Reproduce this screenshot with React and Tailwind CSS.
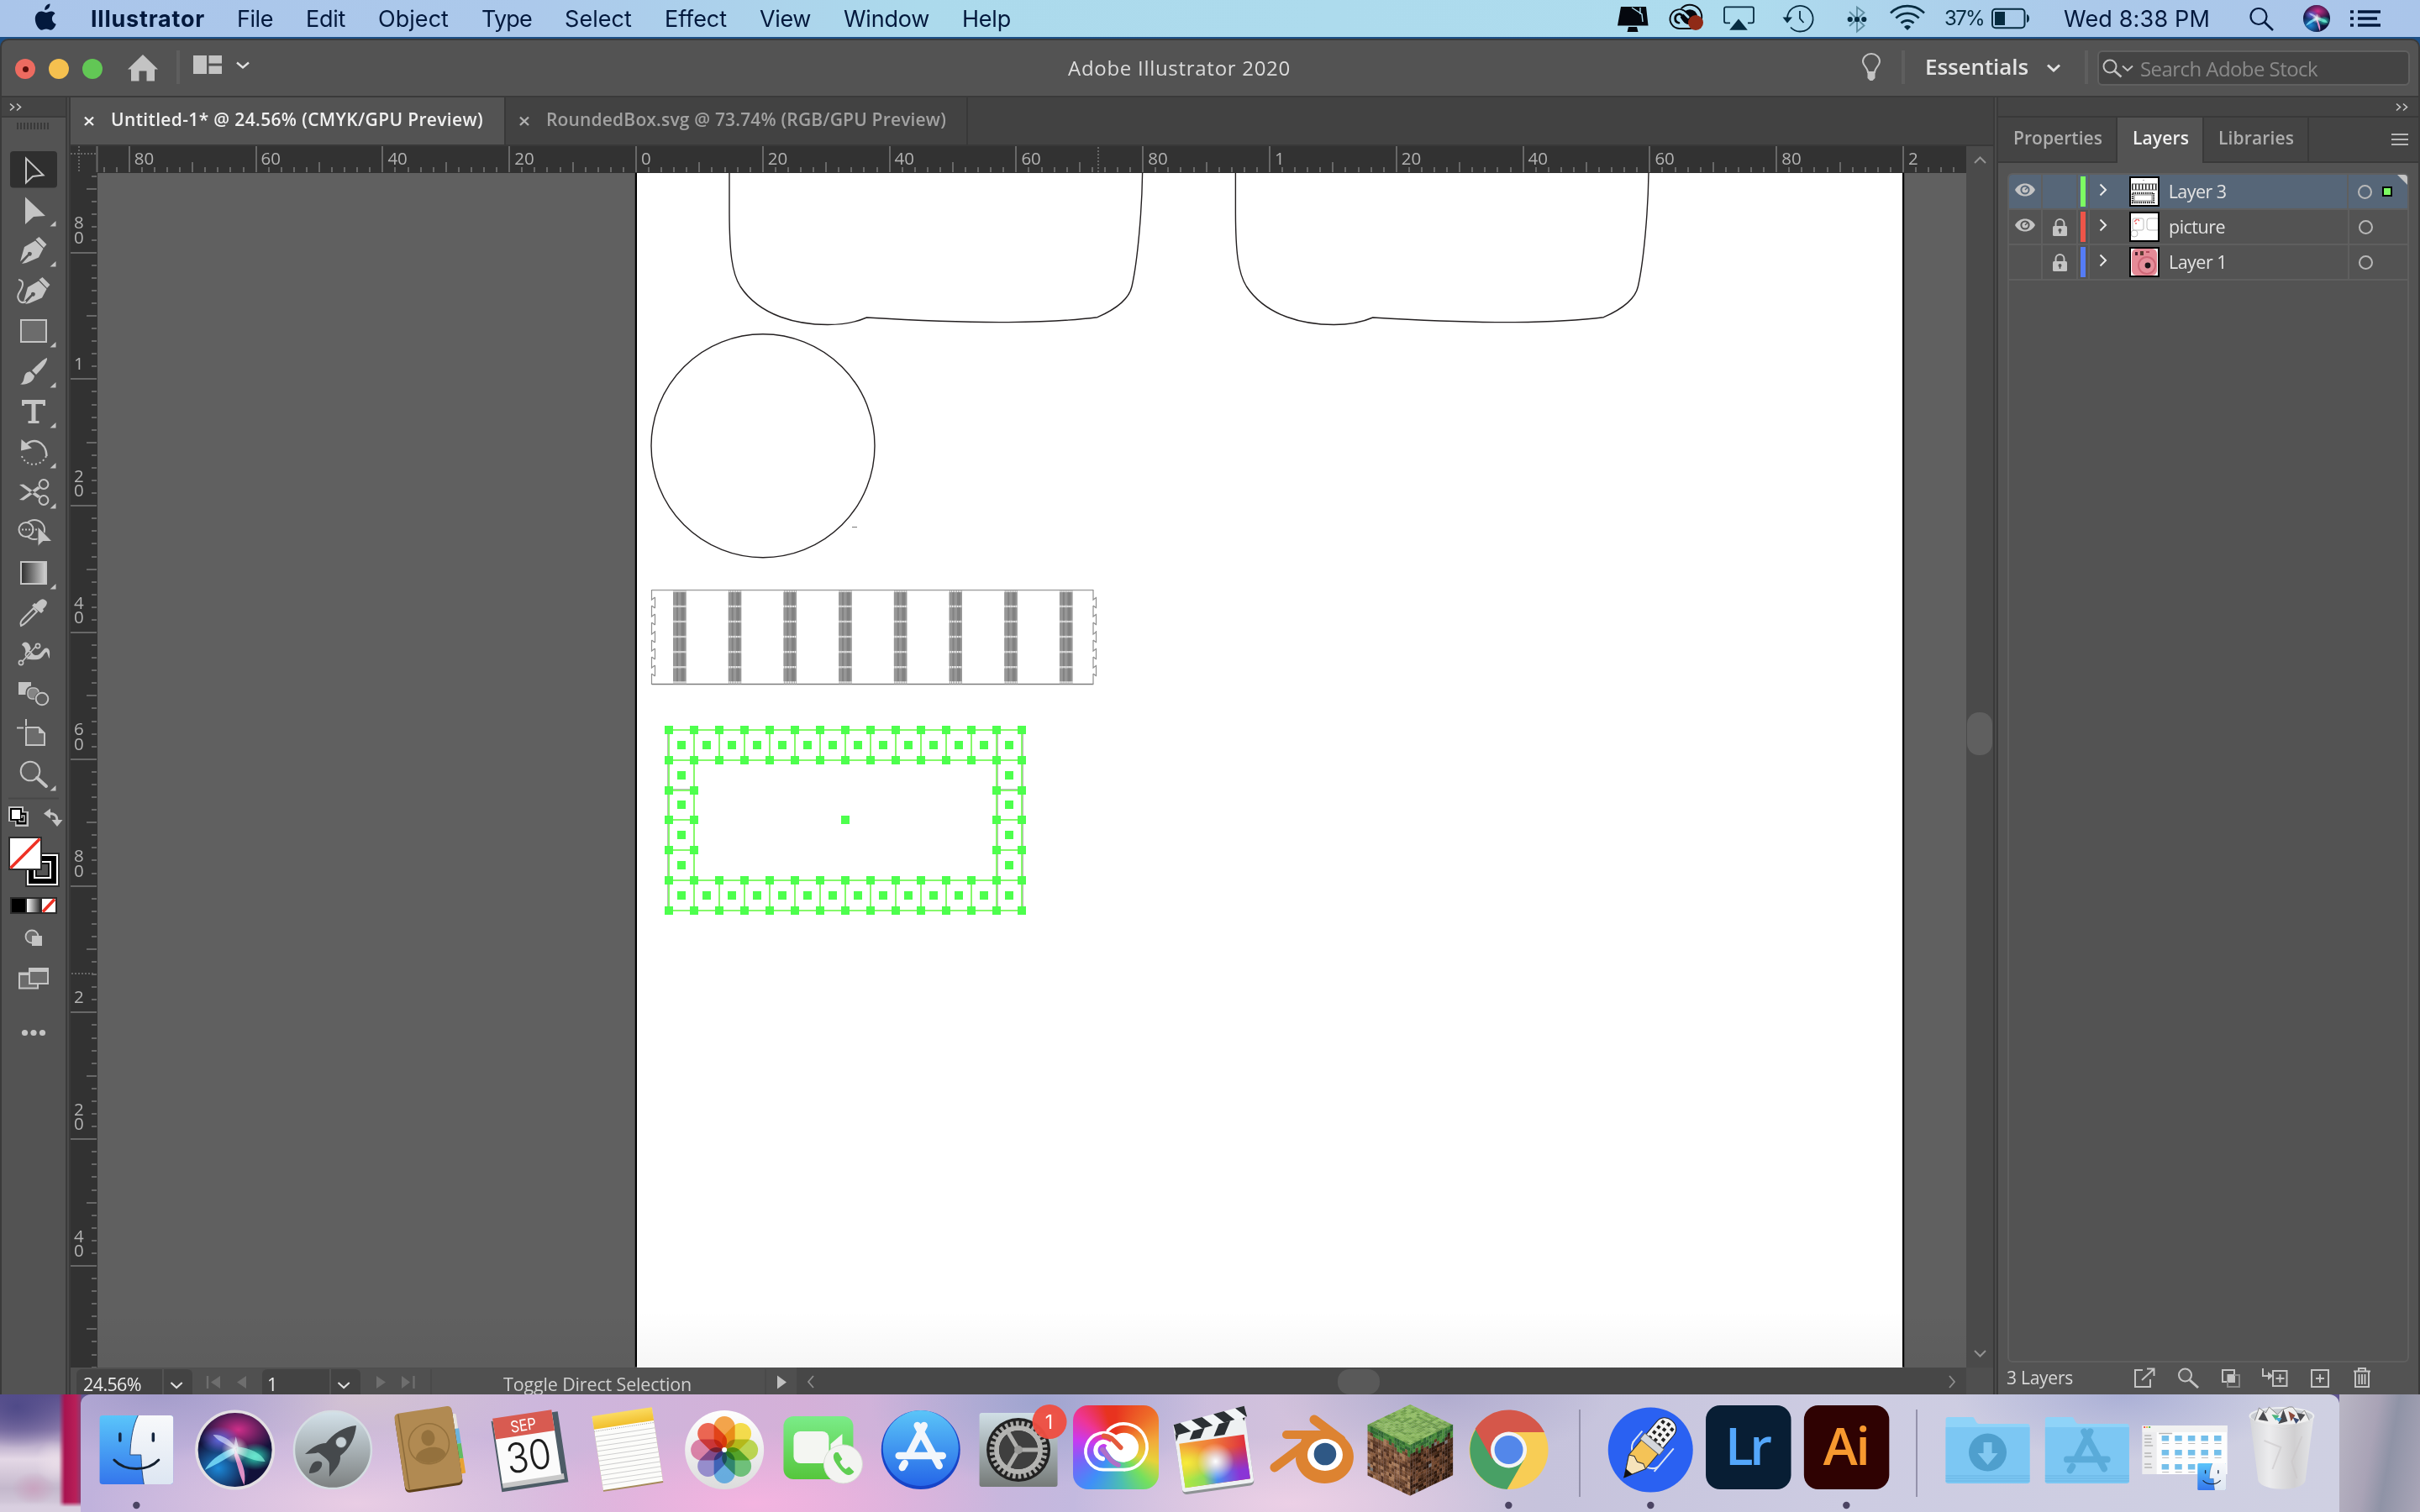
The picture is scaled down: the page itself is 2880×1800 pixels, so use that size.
import React, { useLayoutEffect, useRef, useState } from "react";

const UI = "font-['Open_Sans','Noto_Sans',sans-serif]";
const SYS = "font-['Inter',sans-serif]";

/* Single-line label whose tracking is adjusted to fill a given width. */
function T({ w, className = "", children }) {
  const ref = useRef(null);
  const [ls, setLs] = useState(0);
  useLayoutEffect(() => {
    const el = ref.current;
    const natural = el.getBoundingClientRect().width;
    setLs((w - natural) / el.textContent.length);
  }, [w]);
  return (
    <span className={"inline-block shrink-0 whitespace-nowrap " + className} style={{ width: w }}>
      <span ref={ref} style={{ letterSpacing: ls }}>{children}</span>
    </span>
  );
}

/* Drawing whose user space uses window coordinates. */
function Draw({ x, y, w, h, className = "", children }) {
  return (
    <svg width={w} height={h} viewBox={`${x} ${y} ${w} ${h}`} fill="none" className={"block shrink-0 " + className}>
      {children}
    </svg>
  );
}

/* ---------- menu bar ---------- */

const MENUS = [["File", 43], ["Edit", 47], ["Object", 84], ["Type", 60], ["Select", 80], ["Effect", 74], ["View", 61], ["Window", 102], ["Help", 58]];

function CloudMark({ color, cut, cut2 }) {
  return (
    <g fill="none" strokeLinecap="round">
      <path d="M205 270 H130 A66 66 0 1 1 176 154" stroke={color} strokeWidth="11" />
      <path d="M146 130 A82 82 0 1 1 205 270" stroke={color} strokeWidth="11" />
      <circle cx="204" cy="190" r="52" fill={color} />
      <path d="M204 234 C170 234 165 215 148 192" stroke={color} strokeWidth="18" />
      <path d="M128 231 A31 31 0 0 1 128 170 C150 168 158 192 184 218" stroke={color} strokeWidth="16" />
      <path d="M132 149 C158 150 168 166 192 191" stroke={cut} strokeWidth="17" />
      <path d="M127 198 C145 218 152 240 184 253" stroke={cut2 || cut} strokeWidth="17" />
    </g>
  );
}

function MenuBar() {
  return (
    <div className={"flex h-[44px] shrink-0 items-center bg-[linear-gradient(90deg,#aac5ea_0%,#acc9eb_22%,#acdaec_38%,#aedcee_72%,#abc9ea_86%,#aac5ea_100%)] text-[27px] leading-none text-[#03193d] " + SYS}>
      <Draw x={38} y={0} w={34} h={44} className="ml-[38px]">
        <path d="M59.5 4.500c.3 3.800-2.600 7.400-6.200 7.500-.5-3.700 2.600-7.200 6.200-7.500zM65.500 16.200c-2.400 1.500-3.700 3.500-3.600 6.200.1 3 1.800 5.200 4.800 6.400-1.500 4-4 7-6.300 7-2.100.1-2.900-1.200-5.400-1.200-2.500 0-3.400 1.200-5.400 1.200-3.400-.2-7.800-7-7.800-13.300 0-5.800 3.700-9.100 7.500-9.100 2.300 0 4.200 1.500 5.600 1.500 1.400 0 3.600-1.600 6.400-1.500 1.800.1 3.400.9 4.200 2.800z" fill="#03193d" />
      </Draw>
      <T w={136} className="ml-[36px] font-bold">Illustrator</T>
      <div className="ml-[38px] flex gap-[39px]">
        {MENUS.map(([m, w]) => <T key={m} w={w}>{m}</T>)}
      </div>
      <Draw x={1920} y={0} w={390} h={44} className="ml-[716px]">
        <path d="M1930 8h30l2.500 22.500h-36.500zM1939 32h10l1.500 6h-13z" fill="#05080f" />
        <path d="M1943 9l12 8 1 9M1953 9v8" stroke="#aedcee" strokeWidth="1.400" />
        <g transform="translate(1977 -12.500) scale(0.172)"><CloudMark color="#05080f" cut="#aedcee" /></g>
        <circle cx="2019" cy="27" r="9" fill="#8f2a17" />
        <path d="M2060 27.300h-5a2 2 0 0 1-2-2v-15a2 2 0 0 1 2-2h31a2 2 0 0 1 2 2v15a2 2 0 0 1-2 2h-5" stroke="#062b40" strokeWidth="1.800" />
        <path d="M2070 22.500l10.800 13.300h-21.600z" fill="#062b40" />
        <path d="M2128 21.500a15.300 15.300 0 1 1 4 11" stroke="#062b40" strokeWidth="1.800" />
        <path d="M2122.500 20.500h11.500l-6 7z" fill="#062b40" />
        <path d="M2143 13v9l4.500 5" stroke="#062b40" strokeWidth="1.800" />
        <path d="M2202 14l17.500 16.500-8.500 7v-29l8.500 6.500-17.500 16" stroke="#5e8ca0" strokeWidth="1.800" />
        <circle cx="2202.700" cy="23" r="3.100" fill="#062b40" /><circle cx="2211" cy="23" r="3.100" fill="#062b40" /><circle cx="2219.300" cy="23" r="3.100" fill="#062b40" />
        <path d="M2251 15.500a28 28 0 0 1 40 0M2257.300 21.500a19.500 19.500 0 0 1 27.400 0M2263.500 27.500a10.500 10.500 0 0 1 15 0" stroke="#062b40" strokeWidth="2.600" />
        <path d="M2267 32a5 5 0 0 1 8 0l-4 4z" fill="#062b40" />
      </Draw>
      <T w={47} className="ml-[5px] text-[24px] text-[#062b40]">37%</T>
      <Draw x={2368} y={0} w={56} h={44} className="ml-[5px]">
        <rect x="2373" y="10.800" width="38.500" height="22.500" rx="4" stroke="#062b40" strokeWidth="2" />
        <rect x="2376" y="14" width="12" height="16" fill="#062b40" />
        <path d="M2414 17c4 1 4 9 0 10z" fill="#062b40" />
      </Draw>
      <T w={174} className="ml-[34px]">Wed 8:38 PM</T>
      <Draw x={2670} y={0} w={172} h={44} className="ml-[39px]">
        <circle cx="2689" cy="19.500" r="9.500" stroke="#03193d" strokeWidth="2.200" />
        <path d="M2696 26.500l10 9.500" stroke="#03193d" strokeWidth="2.600" />
        <SiriOrb cx={2758} cy={22} r={16} id="sm" />
        <path d="M2807 14h27M2807 22h23M2807 30h27" stroke="#03193d" strokeWidth="3.600" />
        <path d="M2798 14h4M2798 22h4M2798 30h4" stroke="#03193d" strokeWidth="3.600" />
      </Draw>
    </div>
  );
}

function SiriOrb({ cx, cy, r, id }) {
  const blob = (n, c) => (
    <radialGradient id={id + n}><stop offset="0" stopColor={c} stopOpacity="0.950" /><stop offset="1" stopColor={c} stopOpacity="0" /></radialGradient>
  );
  return (
    <g>
      <defs>
        {blob("a", "#d8308e")}{blob("b", "#1c8fe0")}{blob("c", "#2fe3c0")}{blob("d", "#ffffff")}{blob("e", "#5b6fe8")}
        <clipPath id={id + "clip"}><circle cx={cx} cy={cy} r={r} /></clipPath>
      </defs>
      <circle cx={cx} cy={cy} r={r} fill="#12123a" />
      <g clipPath={`url(#${id}clip)`}>
        <g transform={`translate(${cx} ${cy}) scale(${r / 44})`}>
          <ellipse cx="4" cy="-24" rx="46" ry="30" fill={`url(#${id}a)`} />
          <ellipse cx="-20" cy="22" rx="38" ry="34" fill={`url(#${id}b)`} />
          <ellipse cx="24" cy="8" rx="22" ry="16" fill={`url(#${id}c)`} />
          <ellipse cx="-18" cy="-12" rx="24" ry="16" fill={`url(#${id}e)`} />
          <path d="M1 0C8 14 14 26 11 42C6 32 3 18 -1 6Z" fill="#f49ad0" fillOpacity="0.900" />
          <path d="M0 4C-12 12 -24 18 -36 24C-28 10 -14 2 -2 -2Z" fill="#7fe6ff" fillOpacity="0.800" />
          <path d="M2 -4C18 -2 32 4 36 14C24 14 12 8 2 4Z" fill="#7ff0d8" fillOpacity="0.700" />
          <path d="M1 -16L4 -4L-2 0ZM-2 -2C-14 -8 -22 -12 -26 -18C-14 -18 -6 -12 0 -4Z" fill="#dfeaff" fillOpacity="0.600" />
          <circle cx="0" cy="0" r="16" fill={`url(#${id}d)`} />
        </g>
      </g>
    </g>
  );
}

/* ---------- title bar ---------- */

function TitleBar() {
  return (
    <div className={"flex h-[66px] shrink-0 items-center bg-[#535353] " + UI}>
      <div className="ml-[16px] flex gap-[16px] pt-[2px]">
        <div className="flex size-6 items-center justify-center rounded-full bg-[#ed6b60]"><div className="size-[7px] rounded-full bg-[#5a0f0a]" /></div>
        <div className="size-6 rounded-full bg-[#f5c04f]" />
        <div className="size-6 rounded-full bg-[#62c755]" />
      </div>
      <Draw x={146} y={48} w={160} h={66} className="ml-[24px]">
        <path d="M170 65l18 17.500h-4v14h-9.500v-12h-9v12h-9.500v-14h-4z" fill="#c3c3c3" />
        <rect x="210" y="60" width="4" height="40" fill="#5e5e5e" />
        <path d="M230 66h16v22h-16zM248.500 66h15.500v9.500h-15.500zM248.500 78.500h15.500v9.500h-15.500z" fill="#c3c3c3" />
        <path d="M282 74.500l7 6 7-6" stroke="#e2e2e2" strokeWidth="2.400" />
      </Draw>
      <T w={265} className="ml-[965px] text-[24px] font-medium text-[#dcdcdc]">Adobe Illustrator 2020</T>
      <Draw x={2210} y={48} w={60} h={66} className="ml-[673px]">
        <path d="M2224 86c0-5-6-8-6-13a10 9 0 0 1 20 0c0 5-6 8-6 13z" stroke="#c3c3c3" strokeWidth="2" />
        <path d="M2223.500 86h9v7l-3 3h-3l-3-3z" fill="#c3c3c3" />
        <rect x="2264" y="60" width="4" height="40" fill="#5e5e5e" />
      </Draw>
      <T w={123} className="-mt-[4px] ml-[22px] text-[26px] font-semibold text-[#e4e4e4]">Essentials</T>
      <Draw x={2430} y={48} w={60} h={66} className="ml-[15px]">
        <path d="M2438 77.500l7 6.500 7-6.500" stroke="#e2e2e2" strokeWidth="3" />
        <rect x="2482" y="60" width="4" height="40" fill="#5e5e5e" />
      </Draw>
      <div className="ml-[7px] flex h-[42px] w-[372px] items-center rounded-[6px] border-2 border-[#606060] bg-[#444444]">
        <Draw x={2499} y={62} w={44} h={38}>
          <circle cx="2512" cy="79" r="7.500" stroke="#c3c3c3" strokeWidth="2" />
          <path d="M2517.500 84.500l8 7" stroke="#c3c3c3" strokeWidth="2.600" />
          <path d="M2527 78.500l6 5.500 6-5.500" stroke="#c3c3c3" strokeWidth="2" />
        </Draw>
        <T w={211} className="ml-[5px] mt-[2px] text-[24px] text-[#8a8a8a]">Search Adobe Stock</T>
      </div>
    </div>
  );
}

/* ---------- tools ---------- */

const C = "#c4c4c4";
const nib = (
  <g>
    <path d="M24 311.500L29 294L42 286.500L51.500 296L46 306.500L31 313L26 314L34.500 304.500A2.400 2.400 0 1 0 33 302.500Z" fill={C} />
    <path d="M42.500 285L46.500 282L55.500 291L52 295Z" fill={C} />
  </g>
);

const TOOLS = [
  ["select", false, <><rect x="12" y="180" width="56" height="43.500" rx="4" fill="#2f2f2f" /><path d="M31 188.500v29l8-7.500 12.500-1.500z" stroke={C} strokeWidth="2" /></>],
  ["direct", true, <path d="M30 234.500v32.500l10-9 14-1z" fill={C} />],
  ["pen", true, nib],
  ["curve", false, <><g transform="translate(4 48)">{nib}</g><path d="M22 333c8 1 5 9 1 15s0 15 8 11" stroke={C} strokeWidth="2" /></>],
  ["rect", true, <rect x="25" y="381" width="30" height="26" fill="#6c6c6c" stroke={C} strokeWidth="2" />],
  ["brush", true, <><path d="M56 426c1 4-6 13-13 20l-5-5c6-6 14-14 18-15z" fill={C} /><path d="M36 442.500l5 5c-1 7-9 11-17 10 4-2 4-5 5-9s3-6 7-6z" fill={C} /></>],
  ["type", true, <path d="M26 476h28v7h-3v-2h-8.500v20h4v3h-13v-3h4v-20h-8.500v2h-3z" fill={C} />],
  ["rotate", true, <><path d="M29 532c9-13 26-7 26.500 11" stroke={C} strokeWidth="2.400" /><path d="M25.500 523l-.5 13.500 13-3z" fill={C} /><path d="M26 543c5 13 23 13 29 0" stroke={C} strokeWidth="2" strokeDasharray="2 3" /></>],
  ["scissors", true, <><circle cx="52" cy="576.500" r="5.400" stroke={C} strokeWidth="2" /><circle cx="52" cy="595.500" r="5.400" stroke={C} strokeWidth="2" /><path d="M23 577l5-.5 20 14-3 2.500zM23 595l5 .5 20-14-3-2.500z" fill={C} /></>],
  ["builder", false, <><ellipse cx="41" cy="630.500" rx="12" ry="11.500" stroke={C} strokeWidth="2" /><circle cx="31" cy="630.500" r="8.500" fill="#535353" stroke={C} strokeWidth="2" /><path d="M26 630.500h19" stroke={C} strokeWidth="2" strokeDasharray="2 2" /><path d="M45 627v23.500l6-6h11z" fill={C} stroke="#535353" strokeWidth="1" /></>],
  ["gradient", true, <><defs><linearGradient id="gt"><stop offset="0" stopColor="#2b2b2b" /><stop offset="1" stopColor="#d4d4d4" /></linearGradient></defs><rect x="25" y="669" width="30" height="26" fill="url(#gt)" stroke={C} strokeWidth="2" /></>],
  ["dropper", false, <><path d="M25 745c-2-4 1-7 4-10l11-11 4 4-12 12c-3 3-4 4-7 5z" stroke={C} strokeWidth="2" /><path d="M38 721l3-3 2 1c3-4 7-7 10-5 5 2 3 7-2 11l1 2-3 3z" fill={C} /></>],
  ["puppet", false, <><path d="M26 768c1-5 8-5 10 2 2 6 2 9 6 10 8 1 9-11 15-8 3 2 2 7 2 12-2-2-2-7-4-8-3 2-4 8-10 9-8 1-11-1-16 0 2-6 3-14-3-17z" fill={C} /><path d="M27 787l16-19" stroke="#535353" strokeWidth="4" /><path d="M27 787l17-19" stroke={C} strokeWidth="1.600" /><circle cx="25" cy="789" r="2.600" fill="#535353" stroke={C} strokeWidth="1.600" /><circle cx="45" cy="769" r="2.600" fill="#535353" stroke={C} strokeWidth="1.600" /><circle cx="34" cy="779" r="3.600" stroke={C} strokeWidth="1.600" /></>],
  ["blend", false, <><rect x="22" y="812" width="15" height="15" fill={C} /><rect x="32" y="818" width="15" height="15" rx="6" fill="#858585" stroke="#535353" strokeWidth="3" /><rect x="33" y="819" width="13" height="13" rx="5" stroke={C} strokeWidth="1.500" /><circle cx="50" cy="832" r="9" fill="#535353" /><circle cx="50" cy="832" r="7.300" fill="#5c5c5c" stroke={C} strokeWidth="2" /></>],
  ["artboard", false, <><path d="M31 866h15l7 7v14h-22z" fill="#6c6c6c" stroke={C} strokeWidth="2" /><path d="M46 866v7h7z" fill={C} /><path d="M31 856v8M20 866.500h8" stroke={C} strokeWidth="2" /></>],
  ["zoom", true, <><circle cx="36" cy="918" r="11.300" fill="#5c5c5c" stroke={C} strokeWidth="2" /><path d="M44 926l11 10" stroke={C} strokeWidth="4" strokeLinecap="round" /></>],
];

function Toolbar() {
  return (
    <div className="flex w-[76px] shrink-0 flex-col bg-[#535353]">
      <div className="h-[24px] shrink-0 border-b-2 border-[#3a3a3a] bg-[#444444]">
        <Draw x={2} y={116} w={76} h={22}><path d="M12 123.500l4.500 4-4.500 4M20 123.500l4.500 4-4.500 4" stroke="#c8c8c8" strokeWidth="1.600" /></Draw>
      </div>
      <Draw x={2} y={140} w={76} h={38}><path d="M20 150h39" stroke="#3a3a3a" strokeWidth="8" strokeDasharray="2 2" /></Draw>
      {TOOLS.map(([id, more, art], i) => (
        <Draw key={id} x={2} y={178 + i * 48} w={76} h={48}>
          {art}
          {more && <path d={`M66.500 ${215 + i * 48}v6.500h-7z`} fill={C} />}
        </Draw>
      ))}
      <Draw x={2} y={946} w={76} h={300}>
        <path d="M10 950.500h60" stroke="#484848" strokeWidth="2" />
        <path d="M10 960h18v6h6v18h-16v-6h-8z" fill="#c4c4c4" />
        <rect x="19.500" y="967.500" width="12" height="14" fill="#000" />
        <rect x="13" y="963" width="12" height="13" fill="#fff" stroke="#000" strokeWidth="2" />
        <path d="M26 974v-3h3v7h-6v-2" stroke="#c4c4c4" strokeWidth="1.500" />
        <path d="M59 968.500c7 0 9 3 9 8" stroke={C} strokeWidth="3" />
        <path d="M52 968.500l8-6v12zM61.500 976h13l-6.500 8z" fill={C} />
        <rect x="31" y="1016" width="39" height="39" fill="#000" stroke="#2b2b2b" strokeWidth="2" />
        <rect x="33" y="1018" width="35" height="35" stroke="#fff" strokeWidth="2" />
        <rect x="41" y="1026" width="19" height="19" fill="#535353" stroke="#fff" strokeWidth="2" />
        <rect x="43" y="1028" width="15" height="15" stroke="#000" strokeWidth="1.500" />
        <rect x="11" y="997" width="38" height="38" fill="#fff" stroke="#2b2b2b" strokeWidth="2" />
        <path d="M12.500 1033.500l35-35" stroke="#ee3124" strokeWidth="3.600" />
        <rect x="12" y="1068" width="56" height="20" fill="#2b2b2b" />
        <defs><linearGradient id="gs"><stop offset="0" stopColor="#fff" /><stop offset="1" stopColor="#3a3a3a" /></linearGradient></defs>
        <rect x="14" y="1070" width="16" height="16" fill="#000" />
        <rect x="32" y="1070" width="15" height="16" fill="url(#gs)" />
        <rect x="50" y="1070" width="16" height="16" fill="#fff" />
        <path d="M51 1085.500l14-15" stroke="#ee3124" strokeWidth="3.600" />
        <circle cx="38" cy="1115" r="7.500" fill="#6c6c6c" stroke={C} strokeWidth="1.800" />
        <rect x="38" y="1114" width="12" height="12" fill={C} />
        <rect x="23" y="1158.500" width="22" height="18" fill="#6c6c6c" stroke={C} strokeWidth="2" />
        <rect x="23" y="1158" width="22" height="3" fill={C} />
        <rect x="34" y="1152" width="24" height="20" fill={C} />
        <rect x="36" y="1157" width="20" height="13" fill="#6c6c6c" />
        <circle cx="29.500" cy="1229.500" r="3.600" fill={C} /><circle cx="40" cy="1229.500" r="3.600" fill={C} /><circle cx="50.500" cy="1229.500" r="3.600" fill={C} />
      </Draw>
    </div>
  );
}

/* ---------- rulers ---------- */

const RULER_TEXT = { fill: "#b2b2b2", fontSize: 20.5, fontFamily: "'Open Sans','Noto Sans',sans-serif" };
const STEP = 150.8;
const H_LABELS = ["80", "60", "40", "20", "0", "20", "40", "60", "80", "1", "20", "40", "60", "80", "2"];
const V_LABELS = ["80", "1", "20", "40", "60", "80", "2", "20", "40"];

function HRuler() {
  const x0 = 757 - 4 * STEP;
  const ticks = [];
  for (let i = -2; i <= 145; i++) {
    const x = Math.round(x0 + (i * STEP) / 10);
    if (x < 118 || x > 2338) continue;
    const y = i % 10 === 0 ? 174 : i % 5 === 0 ? 193 : 199;
    ticks.push(<rect key={i} x={x - 1} y={y} width="2" height={205 - y} fill="#686868" />);
  }
  return (
    <Draw x={84} y={174} w={2256} h={32} className="bg-[#323232]">
      {ticks}
      <path d="M84 183h31M94 174v31" stroke="#686868" strokeWidth="2" strokeDasharray="2 2" />
      <path d="M115.500 174v31" stroke="#686868" strokeWidth="2" />
      <path d="M1307 175v30" stroke="#686868" strokeWidth="2" strokeDasharray="2 2" />
      {H_LABELS.map((l, i) => <text key={i} x={x0 + i * STEP + 6} y={196} {...RULER_TEXT}>{l}</text>)}
    </Draw>
  );
}

function VRuler() {
  const y0 = 300.6;
  const ticks = [];
  for (let i = -6; i <= 90; i++) {
    const y = Math.round(y0 + (i * STEP) / 10);
    if (y < 208 || y > 1628) continue;
    const x = i % 10 === 0 ? 84 : i % 5 === 0 ? 103 : 109;
    ticks.push(<rect key={i} x={x} y={y - 1} width={115 - x} height="2" fill="#686868" />);
  }
  return (
    <Draw x={84} y={206} w={32} h={1422} className="bg-[#323232]">
      {ticks}
      <path d="M85 1159h27" stroke="#686868" strokeWidth="2" strokeDasharray="2 2" />
      {V_LABELS.map((l, i) => (
        <text key={i} {...RULER_TEXT}>
          {l.split("").map((ch, j) => (
            <tspan key={j} x={88} y={y0 + i * STEP - 11 - (l.length - 1 - j) * 17.5}>{ch}</tspan>
          ))}
        </text>
      ))}
    </Draw>
  );
}

/* ---------- artwork ---------- */

const FRAME = "M868 206 L868 250 C868 300 871 325 881 341 C905 377 950 386.500 985 386.500 C1005 386.500 1020 383 1031.400 378 C1090 381.500 1150 384 1200 383.600 C1250 383 1280 381 1306 377.700 C1328 368 1344 355 1347 341 C1354 310 1359 250 1359.600 206";

function FilmFrame() {
  const X = (i) => 796 + i * 30;
  const Y = [869, 905, 941, 976, 1012, 1048, 1084];
  const sq = (x, y, k) => <rect key={k} x={x - 5} y={y - 5} width="10" height="10" fill="#4dff4d" />;
  const out = [];
  for (let i = 0; i <= 14; i++) {
    [0, 1, 5, 6].forEach((r) => out.push(sq(X(i), Y[r], `t${i}-${r}`)));
    if (i < 14) { out.push(sq(X(i) + 15, 887, "c" + i)); out.push(sq(X(i) + 15, 1066, "d" + i)); }
  }
  [0, 1, 13, 14].forEach((i) => [2, 3, 4].forEach((r) => out.push(sq(X(i), Y[r], `s${i}-${r}`))));
  [0, 13].forEach((i) => [923, 958, 994, 1030].forEach((y) => out.push(sq(X(i) + 15, y, `m${i}-${y}`))));
  out.push(sq(1006, 976, "mid"));
  const lines = [];
  [0, 1, 5, 6].forEach((r) => lines.push(`M796 ${Y[r]}H1216`));
  [2, 3, 4].forEach((r) => lines.push(`M796 ${Y[r]}h30M1186 ${Y[r]}h30`));
  for (let i = 0; i <= 14; i++) lines.push(i < 2 || i > 12 ? `M${X(i)} 869V1084` : `M${X(i)} 869v36M${X(i)} 1048v36`);
  return (
    <g shapeRendering="crispEdges">
      <path d="M794.500 869V1084M1217.500 869V1084M1187.500 869V1084M796 939.500h30M1186 939.500h30" stroke="#b9b9b9" />
      <path d={lines.join("")} stroke="#86f96a" strokeWidth="2" />
      {out}
    </g>
  );
}

function Strip() {
  const d = [[702, 714], [721, 734], [741, 755], [762, 775], [782, 795], [802, 815]];
  const e = [[711, 724], [731, 744], [751, 765], [772, 785], [792, 805]];
  const side = (a, b) =>
    d.map(([p, q], k) => `M${a} ${p}V${q}${k < 5 ? "l4 -3" : ""}${k ? `M${a} ${p}l4 3` : ""}`).join("") + e.map(([p, q]) => `M${b} ${p}V${q}`).join("");
  return (
    <g>
      <path d="M776 702.500H1301" stroke="#a4a4a4" strokeWidth="1.500" />
      <path d="M776 814.500H1301" stroke="#7c7c7c" strokeWidth="1.300" />
      <path d={side(775.500, 779.500)} stroke="#8f8f8f" strokeWidth="1.200" />
      <path d={side(1301, 1304.500)} stroke="#8f8f8f" strokeWidth="1.200" />
      {Array.from({ length: 8 }, (_, i) => {
        const x = 801 + i * 65.7;
        return (
          <g key={i}>
            {Array.from({ length: 8 }, (_, k) => <path key={k} d={`M${x + 1 + k * 2} 702V815`} stroke="#9c9c9c" strokeWidth="0.900" />)}
            {Array.from({ length: 6 }, (_, j) => (
              <g key={j}>
                <rect x={x} y={705 + j * 18.1} width="15.500" height="15.600" fill="#979797" />
                <rect x={x + 4} y={705 + j * 18.1} width="2" height="15.600" fill="#828282" />
                <rect x={x + 9.500} y={705 + j * 18.1} width="4" height="15.600" fill="#828282" />
              </g>
            ))}
          </g>
        );
      })}
    </g>
  );
}

function Canvas() {
  return (
    <Draw x={116} y={206} w={2224} h={1422} className="bg-[#606060]">
      <defs><linearGradient id="fade" x1="0" x2="0" y1="0" y2="1"><stop offset="0" stopColor="#000" stopOpacity="0" /><stop offset="1" stopColor="#000" stopOpacity="0.035" /></linearGradient></defs>
      <rect x="755" y="206" width="1512" height="1422" fill="#4a4a4a" />
      <rect x="756" y="206" width="1510" height="1421" fill="#000" />
      <rect x="758" y="206" width="1506" height="1422" fill="#fff" />
      <g stroke="#231f20" strokeWidth="1.400">
        <path d={FRAME} />
        <path d={FRAME} transform="translate(602.400 0)" />
        <circle cx="908" cy="530.700" r="133" />
        <path d="M1014 627.500h6" strokeWidth="1" stroke="#777" />
      </g>
      <Strip />
      <FilmFrame />
      <rect x="116" y="1560" width="2224" height="68" fill="url(#fade)" />
    </Draw>
  );
}

/* ---------- document area ---------- */

function Cross({ c }) {
  return <svg width="12" height="12" viewBox="0 0 12 12" className="shrink-0"><path d="M1 1.500l10 9.500M11 1.500L1 11" stroke={c} strokeWidth="2.400" /></svg>;
}

function StatusBar() {
  return (
    <div className={"flex h-[32px] shrink-0 items-end bg-[#4f4f4f] text-[21.500px] " + UI}>
      <div className="ml-[7px] flex h-[30px] w-[102px] items-center rounded-tl-[6px] bg-[#434343] pl-[8px] pt-[6px] text-[#ececec]"><T w={69} className="font-medium">24.56%</T></div>
      <Draw x={193} y={1630} w={36} h={30} className="rounded-tr-[6px] border-l-2 border-[#535353] bg-[#434343]"><path d="M202 1646l7 6.500 7-6.500" stroke="#e2e2e2" strokeWidth="2.200" /></Draw>
      <Draw x={229} y={1630} w={83} h={30} className="bg-[#505050]">
        <path d="M247 1638v15" stroke="#6e6e6e" strokeWidth="2.400" /><path d="M262 1638v15l-11-7.500zM293 1638v15l-11-7.500z" fill="#6e6e6e" />
      </Draw>
      <div className="flex h-[30px] w-[80px] items-center rounded-tl-[6px] bg-[#434343] pl-[6px] pt-[6px] text-[#ececec]">1</div>
      <Draw x={392} y={1630} w={37} h={30} className="rounded-tr-[6px] border-l-2 border-[#535353] bg-[#434343]"><path d="M401 1646l7 6.500 7-6.500" stroke="#e2e2e2" strokeWidth="2.200" /></Draw>
      <Draw x={429} y={1630} w={83} h={30} className="bg-[#505050]">
        <path d="M448 1638v15l11-7.500zM478 1638v15l10-7.500z" fill="#6e6e6e" /><path d="M492.500 1638v15" stroke="#6e6e6e" strokeWidth="2.400" />
      </Draw>
      <div className="flex h-[30px] w-[400px] items-center border-x-2 border-[#4a4a4a] bg-[#505050] pl-[85px] pt-[6px] text-[#d0d0d0]"><T w={224}>Toggle Direct Selection</T></div>
      <Draw x={912} y={1628} w={1460} h={32}>
        <rect x="948" y="1628" width="1392" height="32" fill="#474747" />
        <path d="M925 1637.500v16l11-8z" fill="#c0c0c0" />
        <path d="M968 1638l-6 7 6 7M2320 1638l6 7-6 7" stroke="#8e8e8e" strokeWidth="1.800" />
        <rect x="1592" y="1630" width="50" height="30" rx="14" fill="#595959" />
      </Draw>
    </div>
  );
}

function DocumentArea() {
  return (
    <div className="flex w-[2288px] shrink-0 flex-col">
      <div className={"flex h-[58px] shrink-0 border-b-2 border-[#383838] bg-[#424242] text-[21px] " + UI}>
        <div className="flex w-[518px] items-center border-r-2 border-[#383838] bg-[#535353] pl-[16px]">
          <Cross c="#f0f0f0" />
          <T w={443} className="-mt-[3px] ml-[20px] font-semibold text-[#f0f0f0]">Untitled-1* @ 24.56% (CMYK/GPU Preview)</T>
        </div>
        <div className="flex w-[550px] items-center border-r-2 border-[#383838] pl-[16px]">
          <Cross c="#b0b0b0" />
          <T w={476} className="-mt-[3px] ml-[20px] font-semibold text-[#a2a2a2]">RoundedBox.svg @ 73.74% (RGB/GPU Preview)</T>
        </div>
      </div>
      <div className="flex h-[1454px] shrink-0">
        <div className="flex w-[2256px] flex-col">
          <HRuler />
          <div className="flex"><VRuler /><Canvas /></div>
        </div>
        <Draw x={2340} y={174} w={32} h={1454} className="bg-[#4a4a4a]">
          <path d="M2350 194l6.500-6.500 6.500 6.500M2350 1608l6.500 6.500 6.500-6.500" stroke="#949494" strokeWidth="2" />
          <rect x="2341" y="848" width="30" height="51" rx="14" fill="#5f5f5f" />
        </Draw>
      </div>
      <StatusBar />
    </div>
  );
}

/* ---------- layers panel ---------- */

const LAYERS = [
  { name: "Layer 3", w: 69, color: "#7dfb62", eye: true, lock: false, selected: true },
  { name: "picture", w: 67, color: "#ee5549", eye: true, lock: true },
  { name: "Layer 1", w: 69, color: "#557cf5", eye: false, lock: true },
];

function Thumb({ i }) {
  return (
    <svg width="36" height="36" viewBox="0 0 36 36" className="block shrink-0">
      <rect width="36" height="36" fill="#000" /><rect x="2" y="2" width="32" height="32" fill="#fff" />
      {i === 0 && <>
        <path d="M3 12.500H33" stroke="#222" strokeWidth="7" strokeDasharray="1.500 2.500" /><path d="M3 9h30M3 16h30" stroke="#555" />
        <rect x="4" y="20" width="25" height="11" stroke="#333" strokeWidth="2.400" strokeDasharray="1.500 1" fill="none" />
        <rect x="6" y="22" width="21" height="7" fill="#fff" stroke="#666" strokeWidth="0.800" /><path d="M16 4.500h2" stroke="#aaa" /></>}
      {i === 1 && <>
        <rect x="4" y="8" width="13" height="14" rx="2" fill="none" stroke="#bbb" /><rect x="21" y="8" width="15" height="14" rx="3" fill="none" stroke="#bbb" />
        <circle cx="6" cy="26" r="4" fill="none" stroke="#bbb" /><path d="M6 12l3-3M7 14h2M10 9l2 2" stroke="#e66" strokeWidth="1.500" /><path d="M35 0v36M1 0v36" stroke="#000" strokeWidth="2" /></>}
      {i === 2 && <>
        <rect x="3" y="2" width="30" height="32" rx="6" fill="#e58a96" /><circle cx="21" cy="22" r="11" fill="#cf6878" /><circle cx="21" cy="22" r="9" fill="#e58f9b" />
        <circle cx="22" cy="22" r="3.400" fill="#1d1418" /><rect x="7" y="6" width="3" height="4" fill="#4b2030" /><rect x="13" y="5" width="4" height="5" fill="#5a3a30" /><rect x="20" y="5" width="4" height="2" fill="#b44a5c" /></>}
    </svg>
  );
}

function LayerRow({ layer, i }) {
  return (
    <div className={"flex h-[42px] shrink-0 border-b-2 border-[#5f5f5f] " + (layer.selected ? "bg-[#566678]" : "bg-[#535353]")}>
      <div className="flex w-[40px] items-center justify-center border-r-2 border-[#5f5f5f]">
        {layer.eye && <svg width="24" height="16" viewBox="0 0 24 16" className="-mt-1"><path d="M0 8C5-2 19-2 24 8C19 18 5 18 0 8Z" fill="#c4c4c4" /><circle cx="12" cy="8" r="5.600" fill={layer.selected ? "#566678" : "#535353"} /><circle cx="12" cy="8" r="3.600" fill="#c4c4c4" /><path d="M12 8l3-3" stroke={layer.selected ? "#566678" : "#535353"} strokeWidth="1.500" /></svg>}
      </div>
      <div className="flex w-[42px] items-center justify-center border-r-2 border-[#5f5f5f]">
        {layer.lock && <svg width="17" height="21" viewBox="0 0 17 21"><path d="M3.500 9V6a5 5 0 0 1 10 0v3" fill="none" stroke="#c4c4c4" strokeWidth="2" /><rect width="17" height="12" y="9" rx="1.500" fill="#c4c4c4" /><circle cx="8.500" cy="14" r="2" fill="#535353" /><path d="M8.500 14v4" stroke="#535353" strokeWidth="1.600" /></svg>}
      </div>
      <div className="flex w-[14px] items-center justify-center border-r-2 border-[#5f5f5f]">
        <div className="h-[36px] w-[6px]" style={{ background: layer.color }} />
      </div>
      <div className="flex w-[47px] items-center pl-[11px]">
        <svg width="10" height="16" viewBox="0 0 10 16" className="-mt-1"><path d="M1.500 1.500l6.500 6.500-6.500 6.500" fill="none" stroke="#ececec" strokeWidth="2" /></svg>
      </div>
      <div className="flex items-center"><Thumb i={i} /></div>
      <div className={"ml-[11px] flex w-[213px] items-center text-[21.500px] font-medium text-[#e4e4e4] " + UI}><T w={layer.w}>{layer.name}</T></div>
      <div className="flex flex-1 items-center border-l-2 border-[#5f5f5f] pl-[11px]">
        <div className="size-[17px] rounded-full border-2 border-[#b8b8b8]" />
        {layer.selected && <>
          <div className="ml-[12px] size-[12px] border-2 border-black bg-[#7dfb62]" />
          <svg width="12" height="12" viewBox="0 0 12 12" className="ml-[6px] self-start"><path d="M0 0h12v12z" fill="#c4c4c4" /></svg>
        </>}
      </div>
    </div>
  );
}

function LayersPanel() {
  return (
    <div className="flex w-[500px] shrink-0 flex-col bg-[#535353]">
      <Draw x={2378} y={116} w={500} h={22} className="bg-[#444444]"><path d="M2852 123.500l4.500 4-4.500 4M2860 123.500l4.500 4-4.500 4" stroke="#c8c8c8" strokeWidth="1.600" /></Draw>
      <div className={"flex h-[56px] shrink-0 border-t-2 border-[#393939] bg-[#444444] text-[21px] font-semibold text-[#aeaeae] " + UI}>
        <div className="flex w-[142px] items-center border-b-2 border-r-2 border-[#393939] pb-[2px] pl-[18px]"><T w={106}>Properties</T></div>
        <div className="flex w-[103px] items-center border-r-2 border-[#393939] bg-[#535353] pb-[4px] pl-[18px] text-[#f0f0f0]"><T w={67}>Layers</T></div>
        <div className="flex w-[125px] items-center border-b-2 border-r-2 border-[#393939] pb-[2px] pl-[17px]"><T w={90}>Libraries</T></div>
        <div className="flex flex-1 items-center justify-end border-b-2 border-[#393939] pr-[12px]">
          <svg width="20" height="14" viewBox="0 0 20 14"><path d="M0 1h20M0 7h20M0 13h20" stroke="#b8b8b8" strokeWidth="1.800" /></svg>
        </div>
      </div>
      <div className="ml-[11px] mt-[12px] flex h-[1416px] w-[478px] shrink-0 flex-col overflow-hidden rounded-[6px] border-2 border-[#5f5f5f]">
        {LAYERS.map((l, i) => <LayerRow key={l.name} layer={l} i={i} />)}
      </div>
      <div className={"flex h-[38px] shrink-0 items-center pl-[10px] text-[21px] font-medium text-[#d8d8d8] " + UI}>
        <T w={79}>3 Layers</T>
        <Draw x={2530} y={1622} w={300} h={38} className="ml-[63px]">
          <g stroke={C} strokeWidth="2">
            <path d="M2550 1631h-9v20h18v-9M2549 1643l14-13M2555 1629.500h8.500v8.500" />
            <circle cx="2600.500" cy="1637" r="7.500" fill="#5c5c5c" /><path d="M2606 1643l10 9" strokeWidth="3" />
            <rect x="2645" y="1631" width="14" height="14" fill="#535353" />
            <rect x="2651" y="1637" width="14" height="14" stroke="#8a8a8a" /><rect x="2651" y="1636" width="8" height="9" fill={C} stroke="none" />
            <path d="M2693 1629v9h6" /><path d="M2699 1633l6 5-6 5z" fill={C} stroke="none" />
            <rect x="2705" y="1632" width="16.500" height="18" /><path d="M2708.500 1641h10M2713.500 1636v10" />
            <rect x="2751" y="1631" width="20" height="20" /><path d="M2756 1641h10M2761 1636v10" />
            <path d="M2801 1632.500h20M2807 1632v-3h8v3M2803 1633v18h16v-18M2807.500 1636v12M2811 1636v12M2814.500 1636v12" />
          </g>
        </Draw>
      </div>
    </div>
  );
}

/* ---------- dock ---------- */

function FinderFace({ x, y, w, h }) {
  return (
    <svg x={x} y={y} width={w} height={h} viewBox="0 0 88 82" preserveAspectRatio="none">
      <defs>
        <linearGradient id="ff1" x1="0" x2="0" y1="0" y2="1"><stop offset="0" stopColor="#5ac5fa" /><stop offset="1" stopColor="#3476ec" /></linearGradient>
        <linearGradient id="ff2" x1="0" x2="0" y1="0" y2="1"><stop offset="0" stopColor="#f8f9fb" /><stop offset="1" stopColor="#dde6f2" /></linearGradient>
      </defs>
      <rect width="88" height="82" rx="4" fill="url(#ff1)" />
      <path d="M46 0H84a4 4 0 0 1 4 4V78a4 4 0 0 1-4 4H53C51 72 50 60 49.500 47H36.500C37 28 40 12 46 0Z" fill="url(#ff2)" />
      <path d="M46 0C40 12 37 28 36.500 47H49.500C50 60 51 72 53 82" fill="none" stroke="#2b4a78" strokeWidth="1" />
      <path d="M24.500 22v8M64 22v8" stroke="#14253f" strokeWidth="3.500" strokeLinecap="round" />
      <path d="M17.500 53c13 14 40 14 53 0" fill="none" stroke="#14202f" strokeWidth="3" strokeLinecap="round" />
    </svg>
  );
}

const FINDER = <FinderFace x={118} y={1685} w={88} h={82} />;

const SIRI = <><circle cx="280" cy="1726" r="47.500" fill="#e3dfe3" /><SiriOrb cx={280} cy={1726} r={44} id="lg" /></>;

const LAUNCH = <>
  <defs><linearGradient id="lp" x1="0" x2="0" y1="0" y2="1"><stop offset="0" stopColor="#d4e2ea" /><stop offset="1" stopColor="#7c8080" /></linearGradient></defs>
  <circle cx="396" cy="1726" r="46" fill="url(#lp)" stroke="#d5dde2" strokeWidth="2.500" />
  <path d="M424 1697c-14 1-28 10-36 21-9 0-16 5-25 13l13-1c3-2 4 0 8 3s9 7 8 11l0 14c7-9 14-15 13-25 12-9 18-23 19-36z" fill="#45494c" />
  <circle cx="406" cy="1717" r="6.500" fill="#c6d0d5" stroke="#5d6366" />
  <path d="M383 1741c-5-3-10-1-12 3s-3 6-3 10c4 0 8-1 11-3 3-3 5-6 4-10z" fill="#45494c" />
</>;

const CONTACTS = <g transform="rotate(-8.600 509 1724)">
  <rect x="539" y="1688" width="9" height="72" rx="2" fill="#e8e4dc" /><rect x="540" y="1706" width="9" height="18" fill="#6cb4dd" /><rect x="540" y="1724" width="9" height="18" fill="#64bb62" /><rect x="540" y="1742" width="9" height="18" fill="#e8a234" />
  <rect x="475" y="1681" width="69" height="92" rx="5" fill="#5e4119" /><rect x="475" y="1678" width="69" height="92" rx="5" fill="#b18a52" />
  <path d="M480 1679v90" stroke="#8b6a3a" strokeWidth="1.500" />
  <circle cx="511" cy="1719" r="24" stroke="#94713d" strokeWidth="1.600" /><ellipse cx="511" cy="1712" rx="8" ry="9.500" fill="#94713d" /><path d="M493 1734c2-14 34-14 36 0a24 24 0 0 1-36 0z" fill="#94713d" />
</g>;

const CALENDAR = <g transform="rotate(-8.600 628 1722)">
  <rect x="590" y="1686" width="80" height="85" fill="#4d5c66" /><rect x="592" y="1760" width="74" height="7" fill="#c8c8c8" />
  <rect x="592" y="1685" width="71" height="76" fill="#fbfbfb" /><rect x="592" y="1683" width="71" height="25" fill="#d85b51" />
  <text x="627" y="1703" textAnchor="middle" fill="#fff" fontSize="19" textLength="31" lengthAdjust="spacingAndGlyphs" fontFamily="Inter, sans-serif">SEP</text>
  <text x="628" y="1751" textAnchor="middle" fill="#1d1d1d" fontSize="49" fontWeight="300" textLength="54" lengthAdjust="spacingAndGlyphs" fontFamily="Inter, sans-serif">30</text>
</g>;

const NOTES = <g transform="rotate(-8.600 747 1725)">
  <rect x="711" y="1683" width="72" height="88" fill="#a58a5a" /><rect x="711" y="1681" width="72" height="88" fill="#fcfcfa" />
  <defs><linearGradient id="nt" x1="0" x2="0" y1="0" y2="1"><stop offset="0" stopColor="#fbdc62" /><stop offset="1" stopColor="#f1bf2d" /></linearGradient></defs>
  <rect x="711" y="1680" width="72" height="16" fill="url(#nt)" />
  <path d="M711 1698.500h72" stroke="#999" strokeDasharray="1 1.500" />
  {Array.from({ length: 11 }, (_, k) => <path key={k} d={`M711 ${1705 + k * 5.8}h72`} stroke="#cfcfcf" />)}
</g>;

const PETALS = ["#f29a37", "#f3d83a", "#b5d240", "#62bb6e", "#5aa6de", "#8d83c9", "#d6769f", "#ea5640"];
const PHOTOS = <>
  <defs><linearGradient id="ph" x1="0" x2="0" y1="0" y2="1"><stop offset="0" stopColor="#fff" /><stop offset="1" stopColor="#dcdcdc" /></linearGradient></defs>
  <circle cx="862" cy="1726" r="47" fill="url(#ph)" />
  <g style={{ isolation: "isolate" }}>
    {PETALS.map((c, k) => <rect key={k} x="849.500" y="1686" width="25" height="39" rx="12.500" fill={c} fillOpacity="0.900" transform={`rotate(${k * 45} 862 1726)`} style={{ mixBlendMode: "multiply" }} />)}
  </g>
  <circle cx="862" cy="1726" r="3" fill="#fff" />
</>;

const FACETIME = <>
  <defs><linearGradient id="ft" x1="0" x2="0" y1="0" y2="1"><stop offset="0" stopColor="#7bec88" /><stop offset="1" stopColor="#55c63c" /></linearGradient></defs>
  <rect x="933" y="1686" width="83" height="75" rx="12" fill="url(#ft)" />
  <rect x="945" y="1704" width="42" height="38" rx="8" fill="#f4f6f2" /><path d="M989 1719l14-12v34l-14-12z" fill="#f4f6f2" />
  <circle cx="1004" cy="1743" r="23" fill="#f3f4f1" stroke="#d5dad2" />
  <path d="M995 1729c-4 3-3 8 1 14s9 12 14 13c3 0 6-2 7-4l-6-6-4 3c-3-2-6-6-7-9l3-3-5-8z" fill="#5fce52" />
</>;

function AMark({ color }) {
  return (
    <g stroke={color} strokeLinecap="round" strokeWidth="8.500">
      <path d="M4 -29L-13 4M-4 -29L22 19M-26 7H26M-19 16l-3 5" />
    </g>
  );
}

const APPSTORE = <>
  <defs><linearGradient id="as" x1="0" x2="0" y1="0" y2="1"><stop offset="0" stopColor="#5bc5f8" /><stop offset="1" stopColor="#2566e8" /></linearGradient></defs>
  <circle cx="1096" cy="1726" r="47" fill="#1744c8" /><circle cx="1096" cy="1724" r="45" fill="url(#as)" />
  <g transform="translate(1096 1726)"><AMark color="#f2f6fb" /></g>
</>;

const PREFS = <>
  <defs><linearGradient id="sp" x1="0" x2="0" y1="0" y2="1"><stop offset="0" stopColor="#d0dfe6" /><stop offset="1" stopColor="#757a78" /></linearGradient></defs>
  <rect x="1165.500" y="1682" width="93" height="88" rx="3" fill="url(#sp)" />
  <circle cx="1212" cy="1726" r="38" fill="#222" />
  <circle cx="1212" cy="1726" r="31.500" stroke="#a9a9a7" strokeWidth="6" strokeDasharray="3.600 2.997" />
  <circle cx="1212" cy="1726" r="26" stroke="#b4b4b2" strokeWidth="6" />
  <circle cx="1212" cy="1726" r="23" fill="#3f3f3f" />
  <path d="M1212 1726h25M1212 1726l-13-22M1212 1726l-13 22" stroke="#b0b0ae" strokeWidth="5" /><circle cx="1212" cy="1726" r="5" fill="#9a9a98" />
  <circle cx="1249" cy="1692.500" r="20.500" fill="#ee4e42" fillOpacity="0.960" />
  <text x="1248.500" y="1701" textAnchor="middle" fontSize="23" fill="#fff" fontFamily="Inter, sans-serif">1</text>
</>;

const FCP = <>
  <defs>
    <linearGradient id="fc1" x1="0" y1="0.200" x2="1" y2="0.300"><stop offset="0" stopColor="#f2a93a" /><stop offset="0.500" stopColor="#ef7a3a" /><stop offset="1" stopColor="#df2f3c" /></linearGradient>
    <linearGradient id="fc2" x1="0" x2="1"><stop offset="0" stopColor="#b0e83e" /><stop offset="0.300" stopColor="#8fdc5a" /><stop offset="0.500" stopColor="#4a8ef0" /><stop offset="0.850" stopColor="#8a35d6" /></linearGradient>
    <linearGradient id="fcm" x1="0" x2="0" y1="0.300" y2="0.750"><stop offset="0" stopColor="#fff" stopOpacity="0" /><stop offset="1" stopColor="#fff" /></linearGradient>
    <mask id="fck"><rect x="1400" y="1705" width="90" height="66" fill="url(#fcm)" /></mask>
    <radialGradient id="fcw"><stop offset="0" stopColor="#fff" /><stop offset="1" stopColor="#fff" stopOpacity="0" /></radialGradient>
    <radialGradient id="fcy"><stop offset="0" stopColor="#f8ec3a" /><stop offset="1" stopColor="#f8ec3a" stopOpacity="0" /></radialGradient>
    <clipPath id="fcc"><rect x="1407" y="1713" width="78" height="53" /></clipPath>
  </defs>
  <g transform="rotate(-8 1446 1740)">
    <rect x="1403" y="1712" width="86" height="62" rx="5" fill="#8d9294" /><rect x="1403" y="1692" width="86" height="79" rx="4" fill="#eef1f2" />
    <rect x="1407" y="1713" width="78" height="53" fill="url(#fc1)" /><g mask="url(#fck)"><rect x="1407" y="1713" width="78" height="53" fill="url(#fc2)" /></g>
    <g clipPath="url(#fcc)">
      <ellipse cx="1412" cy="1737" rx="34" ry="22" fill="url(#fcy)" />
      <circle cx="1447" cy="1740" r="22" fill="url(#fcw)" />
    </g>
    <path d="M1404 1693h8l-4 9-4 8zM1430 1693h13l-10 17h-13zM1459 1693h13l-10 17h-13zM1486 1693h3l-2 4z" fill="#2b3034" />
  </g>
  <g transform="rotate(-15 1398 1700)">
    <rect x="1397" y="1696" width="88" height="13" rx="3" fill="#f2f5f7" />
    <path d="M1398 1696h8l10 13h-18zM1420 1696h13l10 13h-13zM1447 1696h13l10 13h-13zM1474 1696h11v13h-1z" fill="#2b3034" />
  </g>
</>;

const BLENDER = <>
  <g stroke="#dd8331" strokeLinecap="round" strokeLinejoin="round">
    <path d="M1564 1690l32 24" strokeWidth="11" /><path d="M1531 1708h40" strokeWidth="10" /><path d="M1517 1747l42-32" strokeWidth="11" />
  </g>
  <path d="M1568 1686l28 22c9 7 15 15 15 26 0 18-15 32-34.500 32S1542 1751 1542 1736l8-26 20-7h8z" fill="#dd8331" />
  <ellipse cx="1577" cy="1732" rx="21" ry="19" fill="#fff" /><circle cx="1577" cy="1731" r="13.300" fill="#2f5885" />
</>;

function pseudo(i) {
  const v = Math.sin(i * 127.1 + 11.7) * 43758.5453;
  return v - Math.floor(v);
}
const GRASS = ["#85b35a", "#77a54e", "#96c168", "#6c9a49", "#8dba5f"];
const DIRT = ["#8a5f42", "#6e4930", "#4f3020", "#a67a58", "#7a5238", "#5d3c28"];
const DARK = ["#5c3a25", "#3d2414", "#73492f", "#2c180c", "#4b2e1c"];
function Face({ m, seed, dirt, top }) {
  const px = [];
  for (let a = 0; a < 16; a++) for (let b = 0; b < 16; b++) {
    const r = pseudo(seed + a * 16 + b);
    const edge = 2 + Math.floor(pseudo(seed + 900 + a) * 3);
    const c = top ? GRASS[Math.floor(r * 5)] : b < edge ? ["#3c7a35", "#2f6430", "#4a8c3a"][Math.floor(r * 3)] : r > 0.97 ? "#777" : dirt[Math.floor(r * dirt.length)];
    px.push(<rect key={a * 16 + b} x={a} y={b} width="1.050" height="1.050" fill={c} />);
  }
  return <g transform={m}>{px}</g>;
}
const BLOCK = <>
  <Face top seed={3} m="matrix(3.170 1.510 -3.170 1.510 1678 1672)" />
  <Face seed={400} dirt={DIRT} m="matrix(3.170 1.510 0 3.770 1627.300 1696)" />
  <Face seed={700} dirt={DARK} m="matrix(3.170 -1.510 0 3.770 1678 1720)" />
</>;

const CHROME = <>
  <circle cx="1796" cy="1726" r="47" fill="#f8cd55" />
  <path d="M1796 1726L1757 1701A47 47 0 0 0 1794 1773L1814 1738Z" fill="#48a065" />
  <path d="M1796 1705H1838.500A47 47 0 0 0 1756 1701L1776 1737Z" fill="#d5574a" />
  <circle cx="1796" cy="1726" r="21.500" fill="#f4f4f4" /><circle cx="1796" cy="1726" r="17" fill="#5387ea" />
</>;

const NOTABILITY = <>
  <circle cx="1964" cy="1726" r="50.500" fill="#2a61f2" />
  <g transform="translate(1932 1758) rotate(40)">
    <path d="M-18 -38v-18M24 -28v-36M-18 -42c0 22 42 22 42 4" stroke="#dbe4f4" strokeWidth="2" />
    <rect x="-12" y="-88" width="26" height="42" rx="12" fill="#f2f2f2" stroke="#222" />
    <path d="M-6 -82v30M1 -84v34M8 -82v30" stroke="#222" strokeWidth="4" strokeDasharray="4 4" />
    <path d="M-12 -24v-30h26v30l-13 24z" fill="#f4c357" stroke="#333" /><path d="M-12 -24l6 -3 7 3 7 -3 6 3 -13 24z" fill="#f6e3bb" stroke="#333" /><path d="M-4 -9h10l-5 10z" fill="#111" />
    <rect x="-14" y="-56" width="30" height="9" fill="#d4d7dc" stroke="#666" />
  </g>
</>;

const adobe = (x, bg, fg, label, w) => <>
  <rect x={x} y="1673" width="101.500" height="100" rx="17" fill={bg} />
  <text x={x + 51} y="1744" textAnchor="middle" textLength={w} fontSize="62" fontWeight="600" fill={fg} fontFamily="'Open Sans',sans-serif">{label}</text>
</>;

const folder = (x, mark) => <>
  <path d={`M${x} 1765v-75a3 3 0 0 1 3-3h29c3 0 3 8 8 8h57a3 3 0 0 1 3 3v67z`} fill="#8fd3f8" />
  <path d={`M${x} 1699h100v64a3 3 0 0 1-3 3h-94a3 3 0 0 1-3-3z`} fill="#7cc7f3" />
  <path d={`M${x} 1757h100M${x} 1760h100M${x} 1763h100`} stroke="#67b5e2" strokeWidth="1" />
  {mark}
</>;

const WINDOW = <>
  <rect x="2549.500" y="1697" width="101" height="58" fill="#fdfdfd" /><rect x="2549.500" y="1697" width="17" height="58" fill="#ececee" /><rect x="2549.500" y="1697" width="101" height="8" fill="#f1f1f1" />
  <path d="M2551 1699h2" stroke="#e55" strokeWidth="2" /><path d="M2554 1699h2" stroke="#eb4" strokeWidth="2" /><path d="M2557 1699h2" stroke="#5b5" strokeWidth="2" />
  <path d="M2552 1709h8M2552 1713h9M2552 1717h8M2552 1721h10M2552 1730h8M2552 1734h9M2552 1743h8M2552 1747h9M2569 1706.500h16" stroke="#b4b4b4" strokeWidth="1.300" />
  {[0, 1, 2].map((r) => [0, 1, 2, 3, 4].map((c) => <g key={r + "-" + c}><rect x={2572.500 + c * 15.6} y={1709 + r * 17} width="8.500" height="6.500" fill="#74bfea" /><path d={`M${2573 + c * 15.6} ${1718.5 + r * 17}h8`} stroke="#bbb" /></g>))}
  <FinderFace x={2615} y={1742} w={34} h={32} />
</>;

const TRASH = <>
  <defs><linearGradient id="tr"><stop offset="0" stopColor="#d4d5d8" /><stop offset="0.300" stopColor="#ededee" /><stop offset="0.700" stopColor="#d0cfd0" /><stop offset="1" stopColor="#e6e7e9" /></linearGradient></defs>
  <ellipse cx="2716" cy="1686" rx="38" ry="10" fill="#c9ccd2" stroke="#eceef0" strokeWidth="2" />
  <path d="M2683 1694l6-18 8 6 4-7 10 9 6-6 8-3 4 0 8 10 6-6 7 14-30 8z" fill="#efefef" stroke="#777" strokeWidth="0.800" />
  <path d="M2688 1690l6-10 6 12zM2712 1695l6-17 5 14zM2734 1682l10 2-6 8z" fill="#4a4a4e" /><path d="M2704 1684l9 1-4 6z" fill="#4bb37a" /><path d="M2724 1680l8 5-5 7z" fill="#8c4a3c" /><path d="M2708 1688l8 0-3 5z" fill="#49a8d8" /><path d="M2729 1687l8 3-4 5z" fill="#3a4a70" />
  <path d="M2678 1687c10 12 66 12 76 0l-10 76c-4 13-50 13-56 0z" fill="url(#tr)" fillOpacity="0.960" />
  <path d="M2695 1715l20 8-10 26M2740 1710l-12 30 6 20" stroke="#c9c7c8" strokeWidth="2" strokeOpacity="0.600" />
</>;

const slot = (cx, art, dot) => (
  <Draw x={cx - 58.35} y={1660} w={116.7} h={140}>{art}{dot && <circle cx={cx} cy="1792" r="4.200" fill="#4b4463" />}</Draw>
);

function Divider() {
  return <div className="flex h-[140px] w-[51.600px] shrink-0 justify-center pt-[18px]"><div className="h-[104px] w-[2px] bg-[#9492ab]" /></div>;
}

function Dock() {
  return (
    <div className="flex h-[140px] w-full items-start bg-[linear-gradient(180deg,transparent_128px,#d9cfe0_134px),linear-gradient(90deg,transparent_70px,#a8124f_77px,#b81f58_90px,#8f3a70_96px,transparent_97px),radial-gradient(ellipse_70px_50px_at_20px_14px,#4f4a88,transparent),radial-gradient(ellipse_24px_26px_at_66px_80px,#e9dde8,transparent),radial-gradient(ellipse_26px_20px_at_40px_112px,#c9a4c0,transparent),linear-gradient(180deg,#5e5390_0%,#8f7fae_30%,#e4d8e6_55%,#c4b8cc_80%,#d9d0e0_100%)]">
      <div className="ml-[96px] flex h-[140px] w-[2688px] shrink-0 overflow-hidden rounded-t-[12px] bg-[radial-gradient(ellipse_300px_90px_at_800px_130px,#f4b4e0,transparent),radial-gradient(ellipse_320px_90px_at_330px_130px,#e9cde4,transparent),radial-gradient(ellipse_260px_80px_at_1440px_130px,#ecd0e6,transparent),radial-gradient(ellipse_200px_100px_at_1140px_10px,#9fa4cf,transparent),radial-gradient(ellipse_220px_80px_at_90px_0px,#a49dcb,transparent),radial-gradient(ellipse_200px_80px_at_340px_0px,#d3c3d2,transparent),radial-gradient(ellipse_200px_80px_at_1620px_0px,#b0accf,transparent),radial-gradient(ellipse_200px_80px_at_2430px_0px,#abb0d6,transparent),linear-gradient(90deg,#c0b2dc_0%,#cdb7dc_20%,#d4b0d8_32%,#c3b9df_44%,#d3c2dc_54%,#c6c3dc_65%,#cdcce2_78%,#cfd0e2_100%)] pl-[7.650px]">
        {slot(162, FINDER, true)}
        {slot(278.7, SIRI)}
        {slot(395.4, LAUNCH)}
        {slot(512.1, CONTACTS)}
        {slot(628.8, CALENDAR)}
        {slot(745.5, NOTES)}
        {slot(862.2, PHOTOS)}
        {slot(978.9, FACETIME)}
        {slot(1095.6, APPSTORE)}
        {slot(1212.3, PREFS)}
        <div className="h-[140px] w-[116.700px] shrink-0 pl-[6.500px] pt-[13px]">
          <div className="h-[100px] w-[102px] rounded-[18px] bg-[conic-gradient(from_0deg,#e8331f,#ee6a28_45deg,#f2a93a_80deg,#e8d23a_110deg,#74e05e_138deg,#4cc0b0_170deg,#3f8ff8_215deg,#7a62f8_250deg,#c83af0_280deg,#ee3596_310deg,#e8331f_345deg,#e8331f)]">
            <svg width="102" height="100" viewBox="22 40 306 300"><CloudMark color="#ffffff" cut="#e45a3c" cut2="#b070c8" /></svg>
          </div>
        </div>
        {slot(1445.7, FCP)}
        {slot(1562.4, BLENDER)}
        {slot(1679.1, BLOCK)}
        {slot(1795.8, CHROME, true)}
        <Divider />
        {slot(1964.1, NOTABILITY, true)}
        {slot(2080.8, adobe(2030.5, "#081e34", "#54a7fb", "Lr", 56))}
        {slot(2197.5, adobe(2147, "#2f0202", "#f7992f", "Ai", 56), true)}
        <Divider />
        {slot(2365.8, folder(2316, <><circle cx="2366" cy="1729" r="22.500" fill="#4f9fcd" /><path d="M2361 1717h10v13h7l-12 14-12-14h7z" fill="#83c9f1" /></>))}
        {slot(2482.5, folder(2434, <g transform="translate(2484 1731) scale(0.920)"><AMark color="#5aabd9" /></g>))}
        {slot(2599.2, WINDOW)}
        {slot(2715.9, TRASH)}
      </div>
      <div className="h-[140px] flex-1 bg-[linear-gradient(100deg,#b9b6c4_0%,#a9a3b6_40%,#8f93a6_60%,#aaa6b8_100%)]" />
    </div>
  );
}

function Gutter() {
  return <div className="w-[6px] shrink-0 border-x-2 border-[#3a3a3a] bg-[#4a4a4a]" />;
}

export default function App() {
  return (
    <div className="flex h-[1800px] w-[2880px] flex-col overflow-hidden bg-[#1c4f86]">
      <MenuBar />
      <div className="mt-[2px] flex h-[1616px] shrink-0 flex-col overflow-hidden rounded-t-[10px] border-2 border-[#3a3a3a] bg-[#3a3a3a]">
        <TitleBar />
        <div className="mt-[2px] flex h-[1544px] shrink-0">
          <Toolbar />
          <Gutter />
          <DocumentArea />
          <Gutter />
          <LayersPanel />
        </div>
      </div>
      <div className="-mt-[2px] shrink-0"><Dock /></div>
    </div>
  );
}
